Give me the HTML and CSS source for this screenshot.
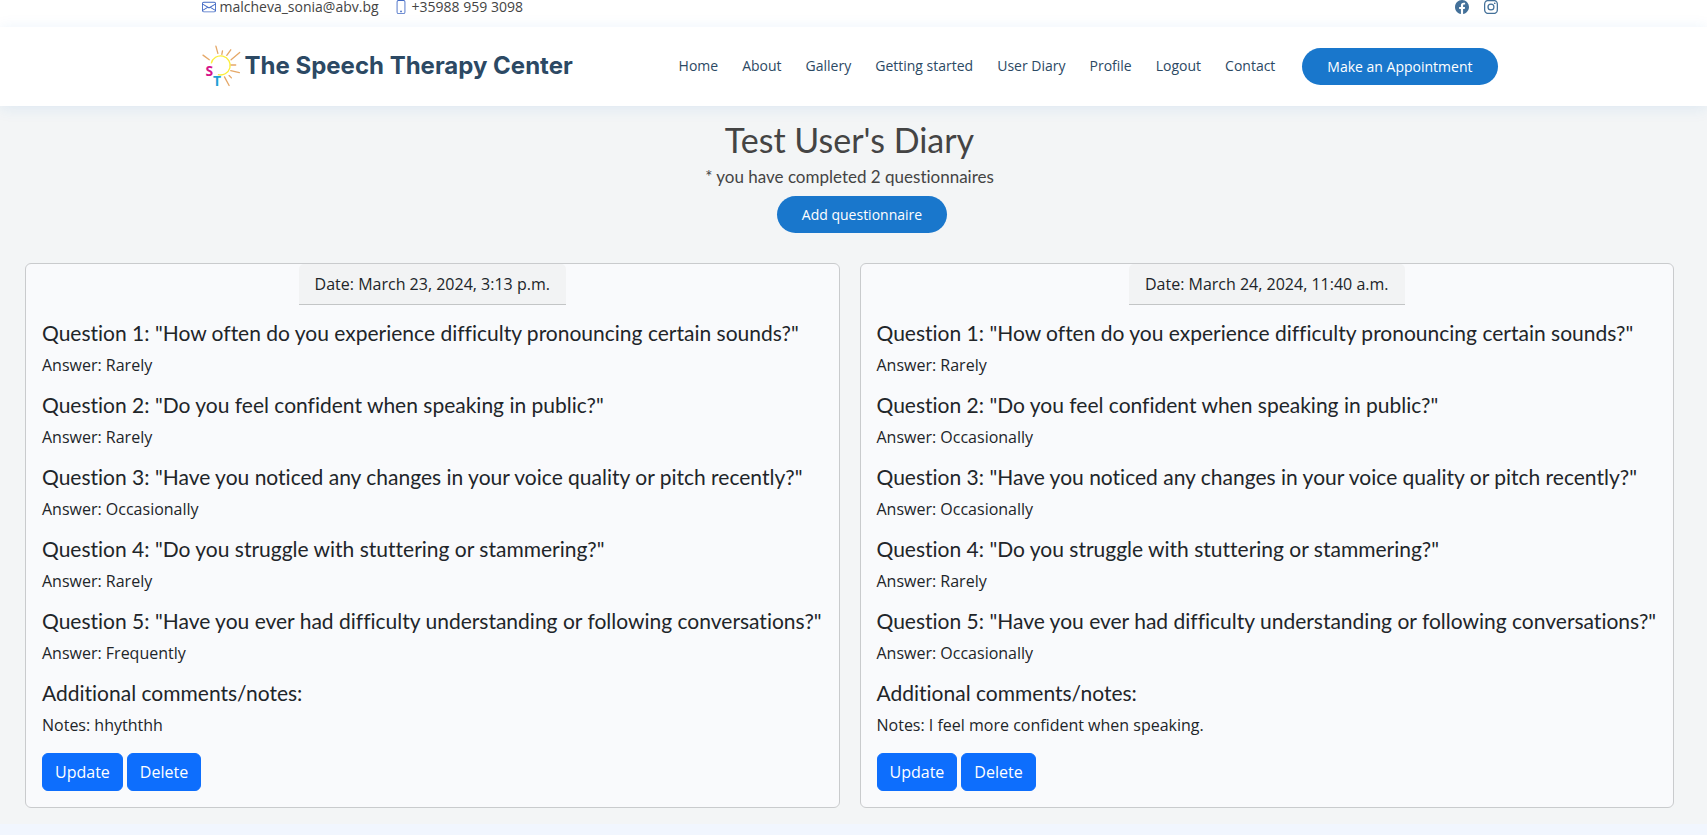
FILE: index.html
```html
<!DOCTYPE html>
<html lang="en">
<head>
<meta charset="utf-8">
<title>The Speech Therapy Center - User Diary</title>
<link rel="stylesheet" href="styles.css">
</head>
<body>
<div class="topbar">
  <div class="container topbar-inner">
    <div class="contact-info">
      <a class="contact-item" href="mailto:malcheva_sonia@abv.bg">
        <svg class="icon" viewBox="0 0 16 16" aria-hidden="true"><path d="M0 4a2 2 0 0 1 2-2h12a2 2 0 0 1 2 2v8a2 2 0 0 1-2 2H2a2 2 0 0 1-2-2V4Zm2-1a1 1 0 0 0-1 1v.217l7 4.2 7-4.2V4a1 1 0 0 0-1-1H2Zm13 2.383-4.708 2.825L15 11.105V5.383Zm-.034 6.876-5.64-3.471L8 9.583l-1.326-.795-5.64 3.47A1 1 0 0 0 2 13h12a1 1 0 0 0 .966-.741ZM1 11.105l4.708-2.897L1 5.383v5.722Z"/></svg>
        <span>malcheva_sonia@abv.bg</span>
      </a>
      <span class="contact-item">
        <svg class="icon" viewBox="0 0 16 16" aria-hidden="true"><path d="M11 1a1 1 0 0 1 1 1v12a1 1 0 0 1-1 1H5a1 1 0 0 1-1-1V2a1 1 0 0 1 1-1h6zM5 0a2 2 0 0 0-2 2v12a2 2 0 0 0 2 2h6a2 2 0 0 0 2-2V2a2 2 0 0 0-2-2H5z"/><path d="M8 14a1 1 0 1 0 0-2 1 1 0 0 0 0 2z"/></svg>
        <span>+35988 959 3098</span>
      </span>
    </div>
    <div class="social">
      <a href="#" aria-label="Facebook"><svg class="icon" viewBox="0 0 16 16" aria-hidden="true"><path d="M16 8.049c0-4.446-3.582-8.05-8-8.05C3.58 0-.002 3.603-.002 8.05c0 4.017 2.926 7.347 6.75 7.951v-5.625h-2.03V8.05H6.75V6.275c0-2.017 1.195-3.131 3.022-3.131.876 0 1.791.157 1.791.157v1.98h-1.009c-.993 0-1.303.621-1.303 1.258v1.51h2.218l-.354 2.326H9.25V16c3.824-.604 6.75-3.934 6.75-7.951z"/></svg></a>
      <a href="#" aria-label="Instagram"><svg class="icon" viewBox="0 0 16 16" aria-hidden="true"><path d="M8 0C5.829 0 5.556.01 4.703.048 3.85.088 3.269.222 2.76.42a3.917 3.917 0 0 0-1.417.923A3.927 3.927 0 0 0 .42 2.76C.222 3.268.087 3.85.048 4.7.01 5.555 0 5.827 0 8.001c0 2.172.01 2.444.048 3.297.04.852.174 1.433.372 1.942.205.526.478.972.923 1.417.444.445.89.719 1.416.923.51.198 1.09.333 1.942.372C5.555 15.99 5.827 16 8 16s2.444-.01 3.298-.048c.851-.04 1.434-.174 1.943-.372a3.916 3.916 0 0 0 1.416-.923c.445-.445.718-.891.923-1.417.197-.509.332-1.09.372-1.942C15.99 10.445 16 10.173 16 8s-.01-2.445-.048-3.299c-.04-.851-.175-1.433-.372-1.941a3.926 3.926 0 0 0-.923-1.417A3.911 3.911 0 0 0 13.24.42c-.51-.198-1.092-.333-1.943-.372C10.443.01 10.172 0 7.998 0h.003zm-.717 1.442h.718c2.136 0 2.389.007 3.232.046.78.035 1.204.166 1.486.275.373.145.64.319.92.599.28.28.453.546.598.92.11.281.24.705.275 1.485.039.843.047 1.096.047 3.231s-.008 2.389-.047 3.232c-.035.78-.166 1.203-.275 1.485a2.47 2.47 0 0 1-.599.919c-.28.28-.546.453-.92.598-.28.11-.704.24-1.485.276-.843.038-1.096.047-3.232.047s-2.39-.009-3.233-.047c-.78-.036-1.203-.166-1.485-.276a2.478 2.478 0 0 1-.92-.598 2.48 2.48 0 0 1-.6-.92c-.109-.281-.24-.705-.275-1.485-.038-.843-.046-1.096-.046-3.233 0-2.136.008-2.388.046-3.231.036-.78.166-1.204.276-1.486.145-.373.319-.64.599-.92.28-.28.546-.453.92-.598.282-.11.705-.24 1.485-.276.738-.034 1.024-.044 2.515-.045v.002zm4.988 1.328a.96.96 0 1 0 0 1.92.96.96 0 0 0 0-1.92zm-4.27 1.122a4.109 4.109 0 1 0 0 8.217 4.109 4.109 0 0 0 0-8.217zm0 1.441a2.667 2.667 0 1 1 0 5.334 2.667 2.667 0 0 1 0-5.334z"/></svg></a>
    </div>
  </div>
</div>

<header class="header">
  <div class="container header-inner">
    <a class="logo" href="#">
      <svg class="logo-mark" viewBox="20 24 118 126" aria-hidden="true">
        <path class="sun" d="M48 79A29 29 0 1 1 68 113"/>
        <path class="rays" d="M23 54L42 68M62 27L68 49M82 41L80 52M107 38L95 55M134 46L108 68M108 84H122M107 101L133 107M102 116L109 123M88 120L102 146"/>
        <text class="mark-s" x="31" y="117">S</text>
        <text class="mark-t" x="53" y="148">T</text>
      </svg>
      <span class="logo-name">The Speech Therapy Center</span>
    </a>
    <nav class="nav">
      <a href="#">Home</a>
      <a href="#">About</a>
      <a href="#">Gallery</a>
      <a href="#">Getting started</a>
      <a href="#">User Diary</a>
      <a href="#">Profile</a>
      <a href="#">Logout</a>
      <a href="#">Contact</a>
    </nav>
    <a class="pill" href="#">Make an Appointment</a>
  </div>
</header>

<main class="diary">
  <div class="intro">
    <h2>Test User's Diary</h2>
    <p>* you have completed 2 questionnaires</p>
    <a class="pill" href="#">Add questionnaire</a>
  </div>
  <div class="cards">
    <article class="card">
      <div class="card-date">Date: March 23, 2024, 3:13 p.m.</div>
      <div class="card-body">
        <h5>Question 1: "How often do you experience difficulty pronouncing certain sounds?"</h5>
        <p>Answer: Rarely</p>
        <h5>Question 2: "Do you feel confident when speaking in public?"</h5>
        <p>Answer: Rarely</p>
        <h5>Question 3: "Have you noticed any changes in your voice quality or pitch recently?"</h5>
        <p>Answer: Occasionally</p>
        <h5>Question 4: "Do you struggle with stuttering or stammering?"</h5>
        <p>Answer: Rarely</p>
        <h5>Question 5: "Have you ever had difficulty understanding or following conversations?"</h5>
        <p>Answer: Frequently</p>
        <h5>Additional comments/notes:</h5>
        <p>Notes: hhyththh</p>
        <div class="actions">
          <button class="btn" type="button">Update</button>
          <button class="btn" type="button">Delete</button>
        </div>
      </div>
    </article>
    <article class="card">
      <div class="card-date">Date: March 24, 2024, 11:40 a.m.</div>
      <div class="card-body">
        <h5>Question 1: "How often do you experience difficulty pronouncing certain sounds?"</h5>
        <p>Answer: Rarely</p>
        <h5>Question 2: "Do you feel confident when speaking in public?"</h5>
        <p>Answer: Occasionally</p>
        <h5>Question 3: "Have you noticed any changes in your voice quality or pitch recently?"</h5>
        <p>Answer: Occasionally</p>
        <h5>Question 4: "Do you struggle with stuttering or stammering?"</h5>
        <p>Answer: Rarely</p>
        <h5>Question 5: "Have you ever had difficulty understanding or following conversations?"</h5>
        <p>Answer: Occasionally</p>
        <h5>Additional comments/notes:</h5>
        <p>Notes: I feel more confident when speaking.</p>
        <div class="actions">
          <button class="btn" type="button">Update</button>
          <button class="btn" type="button">Delete</button>
        </div>
      </div>
    </article>
  </div>
</main>
</body>
</html>
```
FILE: styles.css
```css
* {
  box-sizing: border-box;
}

body {
  margin: 0;
  background: #f1f6fe;
  color: #212529;
  font-family: "Open Sans", sans-serif;
  font-size: 16px;
  line-height: 24px;
}

a {
  color: inherit;
  text-decoration: none;
}

h2, h5, p {
  margin: 0;
  font-weight: 400;
}

.topbar,
.header,
.diary {
  padding-right: 8px;
}

.container {
  max-width: 1320px;
  margin: 0 auto;
  padding: 0 12px;
}

.icon {
  display: block;
  width: 14px;
  height: 14px;
  fill: currentColor;
}

/* Top bar */
.topbar {
  background: #fff;
  color: #444;
  font-size: 14px;
  line-height: 14px;
}

.topbar-inner {
  display: flex;
  justify-content: space-between;
  padding-bottom: 13px;
}

.contact-info {
  display: flex;
  gap: 15px;
}

.contact-item {
  display: flex;
  gap: 4px;
}

.contact-item .icon {
  fill: #4169c4;
}

.social {
  display: flex;
  gap: 15px;
  color: #437099;
}

/* Header */
.header {
  position: relative;
  background: #fff;
  box-shadow: 0 2px 15px rgba(25, 119, 204, 0.1);
}

.header-inner {
  display: flex;
  align-items: center;
  padding-top: 18px;
  padding-bottom: 19px;
}

.logo {
  display: flex;
  align-items: center;
  gap: 4px;
  margin-right: auto;
}

.logo-mark {
  width: 39px;
  height: 42px;
  overflow: visible;
}

.logo-name {
  color: #2c4964;
  font-family: Inter, sans-serif;
  font-size: 24px;
  font-weight: 650;
  line-height: 28px;
}

.sun {
  fill: none;
  stroke: #fbee38;
  stroke-width: 4;
}

.rays {
  fill: none;
  stroke: #e5a868;
  stroke-width: 4;
  stroke-linecap: round;
}

.mark-s,
.mark-t {
  font-family: "Open Sans", sans-serif;
  font-size: 42px;
  font-weight: 700;
  line-height: 1;
}

.mark-s {
  fill: #d6158b;
}

.mark-t {
  fill: #1fa0d5;
}

.nav {
  display: flex;
  gap: 24px;
  margin-right: 27px;
  color: #2c4964;
  font-size: 14px;
}

.pill {
  display: inline-block;
  padding: 8px 25px;
  border-radius: 50px;
  background: #1977cc;
  color: #fff;
  font-size: 14px;
  font-weight: 500;
  line-height: 21px;
}

/* Diary */
.diary {
  padding-top: 15px;
  padding-bottom: 16px;
  background: #f3f5f6;
}

.intro {
  display: flex;
  flex-direction: column;
  align-items: center;
  color: #444;
  font-family: Lato, sans-serif;
}

.intro h2 {
  margin-bottom: 6px;
  font-size: 34px;
  line-height: 38px;
}

.intro p {
  margin-bottom: 7px;
  font-size: 17px;
}

.intro .pill {
  margin-left: 25px;
  font-family: "Open Sans", sans-serif;
}

.cards {
  display: grid;
  grid-template-columns: 1fr 1fr;
  gap: 20px;
  margin-top: 30px;
  padding: 0 25px;
}

.card {
  display: flex;
  flex-direction: column;
  border: 1px solid #c9cbcd;
  border-radius: 6px;
  background: #f9fafc;
}

.card-date {
  align-self: center;
  padding: 8px 16px;
  border-bottom: 1px solid #c3c5c6;
  border-radius: 5px 5px 0 0;
  background: #f2f3f4;
}

.card-body {
  padding: 16px;
}

.intro p,
.card-body h5 {
  font-variant-ligatures: none;
}

.card-body h5 {
  margin-bottom: 8px;
  font-family: Lato, sans-serif;
  font-size: 21px;
  line-height: 24px;
}

.card-body p {
  margin-bottom: 16px;
}

.actions {
  display: flex;
  gap: 4px;
}

.btn {
  padding: 6px 12px;
  border: 1px solid #0d6efd;
  border-radius: 6px;
  background: #0d6efd;
  color: #fff;
  font: inherit;
}
```
